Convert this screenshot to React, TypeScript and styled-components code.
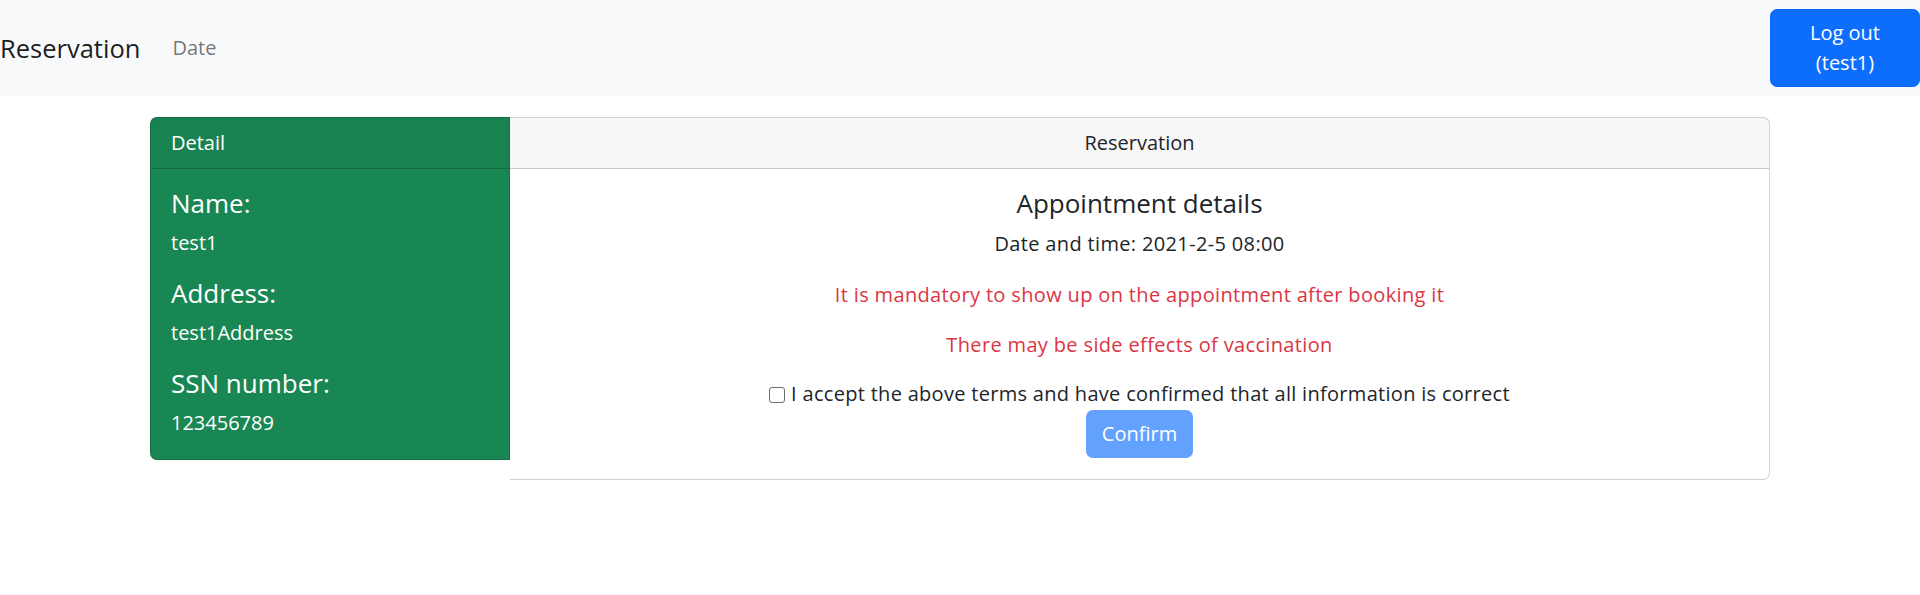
import React from "react";
import styled, { createGlobalStyle } from "styled-components";

const Global = createGlobalStyle`
  html, body { margin: 0; padding: 0; background: #fff; }
  body {
    font-family: "Open Sans", "Noto Sans", Arial, sans-serif;
    font-size: 20px;
    line-height: 30px;
    color: #212529;
  }
  * { box-sizing: border-box; }
`;

const NavBar = styled.nav`
  display: flex;
  align-items: center;
  height: 96px;
  background: #f8f9fa;
`;

const Brand = styled.span`
  font-size: 25.5px;
  line-height: 37px;
  color: rgba(0, 0, 0, 0.9);
  margin-right: 32px;
`;

const NavLink = styled.span`
  font-size: 20px;
  color: rgba(0, 0, 0, 0.55);
`;

const LogoutButton = styled.button`
  margin-left: auto;
  width: 150px;
  height: 78px;
  padding: 8px 15px;
  border: 1px solid #0d6efd;
  border-radius: 7px;
  background: #0d6efd;
  color: #fff;
  font: inherit;
  font-size: 20px;
  line-height: 30px;
  text-align: center;
`;

const Container = styled.main`
  width: 1620px;
  margin: 21px auto 0;
  display: flex;
  align-items: flex-start;
`;

const Card = styled.section<{ $variant: "success" | "plain" }>`
  display: flex;
  flex-direction: column;
  border: 1px solid rgba(0, 0, 0, 0.175);
  ${(p) =>
    p.$variant === "success"
      ? `
    width: 360px;
    background: #198754;
    color: #fff;
    border-radius: 7px 0 0 7px;
  `
      : `
    flex: 1;
    background: #fff;
    border-left: none;
    border-radius: 0 7px 7px 0;
  `}
`;

const CardHeader = styled.header<{ $center?: boolean }>`
  padding: 10px 20px;
  line-height: 30px;
  border-bottom: 1px solid rgba(0, 0, 0, 0.175);
  background: rgba(0, 0, 0, 0.03);
  text-align: ${(p) => (p.$center ? "center" : "left")};
`;

const CardBody = styled.div<{ $center?: boolean }>`
  padding: 19px 20px 21px;
  display: flex;
  flex-direction: column;
  align-items: ${(p) => (p.$center ? "center" : "flex-start")};
  text-align: ${(p) => (p.$center ? "center" : "left")};
`;

const FieldLabel = styled.h4`
  margin: 0 0 9px;
  font-size: 26px;
  line-height: 31px;
  font-weight: 400;
`;

const FieldValue = styled.p`
  margin: 0 0 20px;
  &:last-child { margin-bottom: 0; }
`;

const Title = styled.h5`
  margin: 0 0 10px;
  font-size: 26px;
  line-height: 31px;
  font-weight: 400;
`;

const Line = styled.p<{ $gap: number; $danger?: boolean }>`
  margin: 0 0 ${(p) => p.$gap}px;
  letter-spacing: 0.35px;
  color: ${(p) => (p.$danger ? "#dc3545" : "inherit")};
`;

const CheckRow = styled.label`
  display: block;
  align-self: stretch;
  text-align: center;
  margin-bottom: 1px;
  letter-spacing: 0.3px;
`;

const Check = styled.input`
  appearance: none;
  display: inline-block;
  vertical-align: -2px;
  margin: 0 6px 0 0;
  width: 16px;
  height: 16px;
  border: 1.5px solid #6d6d6d;
  border-radius: 3px;
  background: #fff;
`;

const ConfirmButton = styled.button`
  padding: 8px 15px;
  border: 1px solid transparent;
  border-radius: 7px;
  background: #62a1fe;
  color: #fff;
  font: inherit;
  font-size: 20px;
  line-height: 30px;
`;

const fields = [
  { label: "Name:", value: "test1" },
  { label: "Address:", value: "test1Address" },
  { label: "SSN number:", value: "123456789" },
];

export default function App() {
  return (
    <>
      <Global />
      <NavBar>
        <Brand>Reservation</Brand>
        <NavLink>Date</NavLink>
        <LogoutButton>
          Log out
          <br />
          (test1)
        </LogoutButton>
      </NavBar>
      <Container>
        <Card $variant="success">
          <CardHeader>Detail</CardHeader>
          <CardBody>
            {fields.map((f) => (
              <React.Fragment key={f.label}>
                <FieldLabel>{f.label}</FieldLabel>
                <FieldValue>{f.value}</FieldValue>
              </React.Fragment>
            ))}
          </CardBody>
        </Card>
        <Card $variant="plain">
          <CardHeader $center>Reservation</CardHeader>
          <CardBody $center>
            <Title>Appointment details</Title>
            <Line $gap={21}>Date and time: 2021-2-5 08:00</Line>
            <Line $gap={20} $danger>
              It is mandatory to show up on the appointment after booking it
            </Line>
            <Line $gap={19} $danger>
              There may be side effects of vaccination
            </Line>
            <CheckRow>
              <Check type="checkbox" />
              I accept the above terms and have confirmed that all information is correct
            </CheckRow>
            <ConfirmButton disabled>Confirm</ConfirmButton>
          </CardBody>
        </Card>
      </Container>
    </>
  );
}
